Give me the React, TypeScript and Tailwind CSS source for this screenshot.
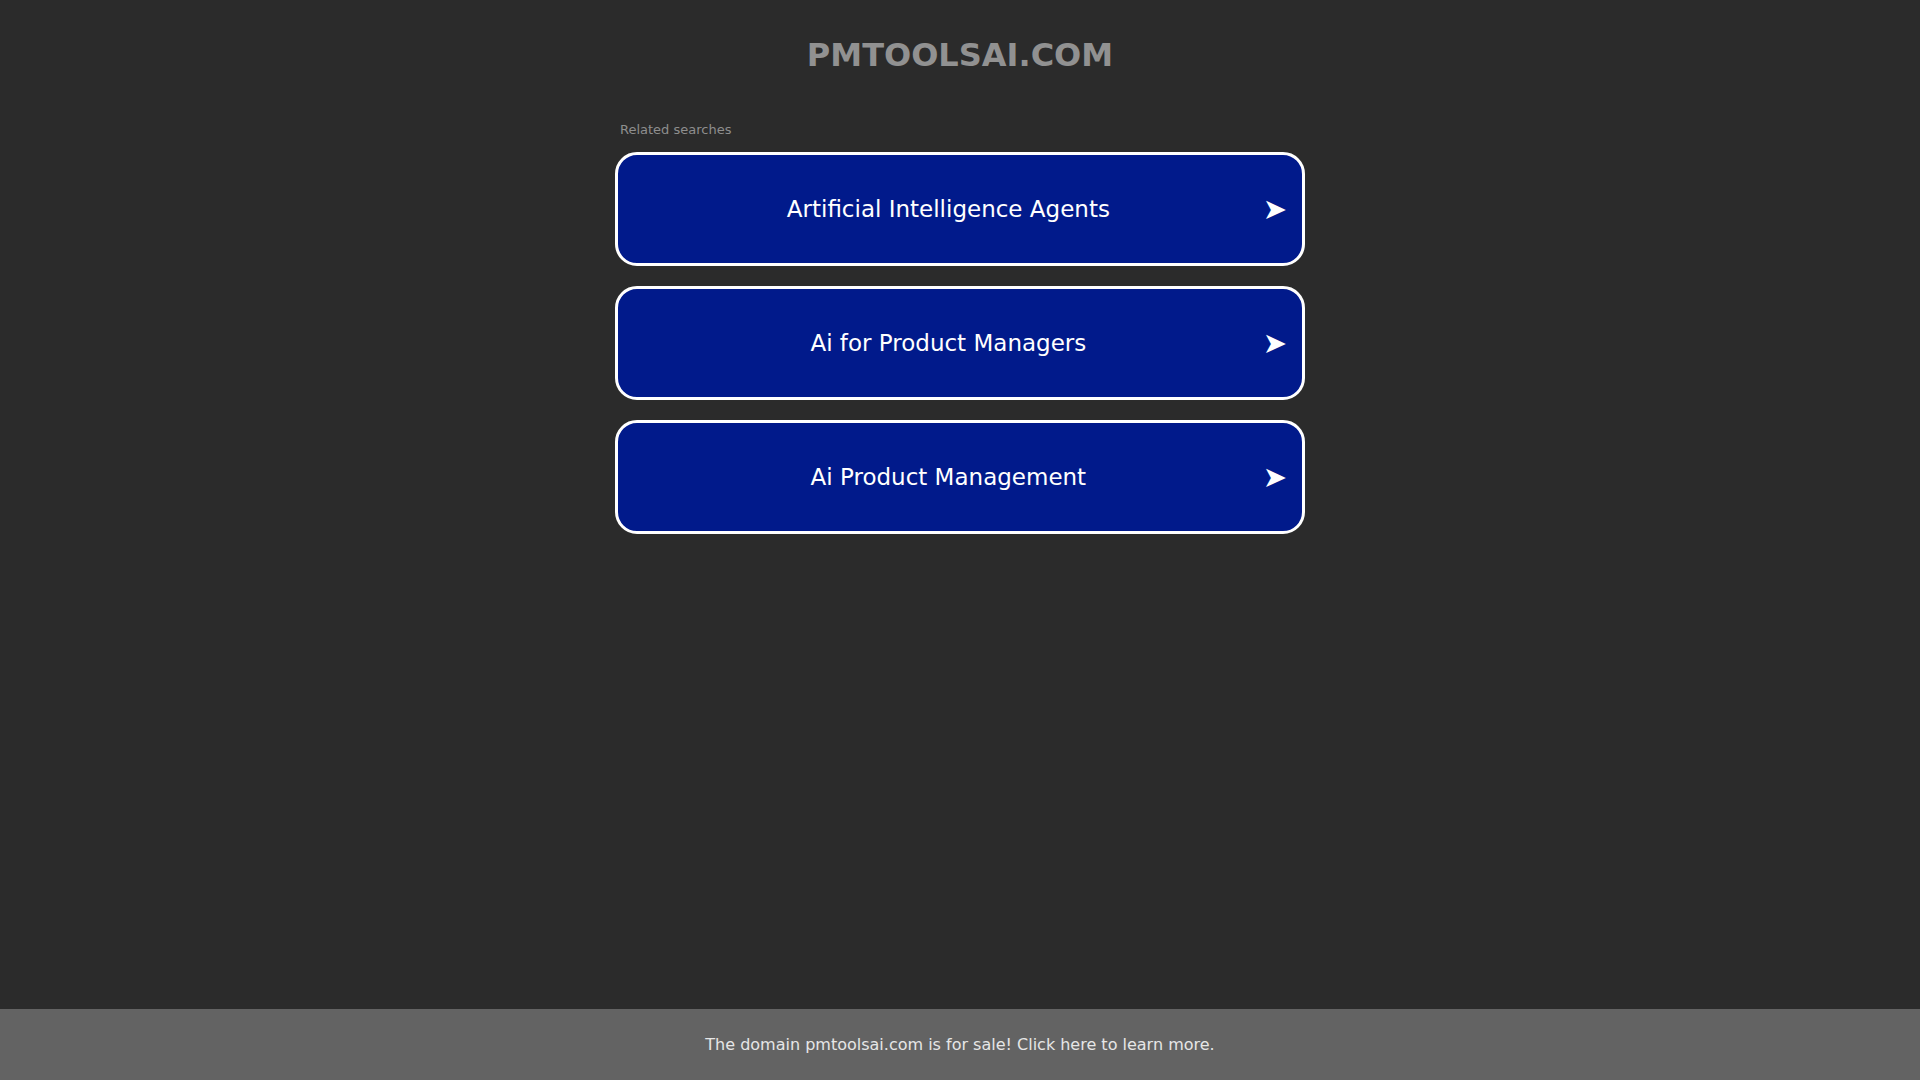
const searches = [
  "Artificial Intelligence Agents",
  "Ai for Product Managers",
  "Ai Product Management",
];

export default function App() {
  return (
    <div
      className="flex min-h-screen flex-col bg-[#2b2b2b]"
      style={{ fontFamily: '"DejaVu Sans", Verdana, sans-serif' }}
    >
      <main className="mx-auto flex w-[690px] flex-col pt-[37px]">
        <h1 className="text-center text-[32px] font-bold leading-[37px] text-[#919191]">
          PMTOOLSAI.COM
        </h1>

        <div className="mt-[48px] pl-[5px] text-[13px] leading-[15px] text-[#8e8e8e]">
          Related searches
        </div>

        <div className="mt-[15px] flex flex-col gap-[20px]">
          {searches.map((label) => (
            <a
              key={label}
              href="#"
              className="flex h-[114px] items-center rounded-[22px] border-[3px] border-white bg-[#011a8b] pl-[16px] pr-[15px] text-white"
            >
              <span className="flex-1 text-center text-[23px]">{label}</span>
              <span className="text-[29px] leading-none">➤</span>
            </a>
          ))}
        </div>
      </main>

      <footer className="mt-auto flex h-[71px] items-center justify-center bg-[#636363] text-[16px] text-[#e6e6e6]">
        The domain pmtoolsai.com is for sale! Click here to learn more.
      </footer>
    </div>
  );
}
